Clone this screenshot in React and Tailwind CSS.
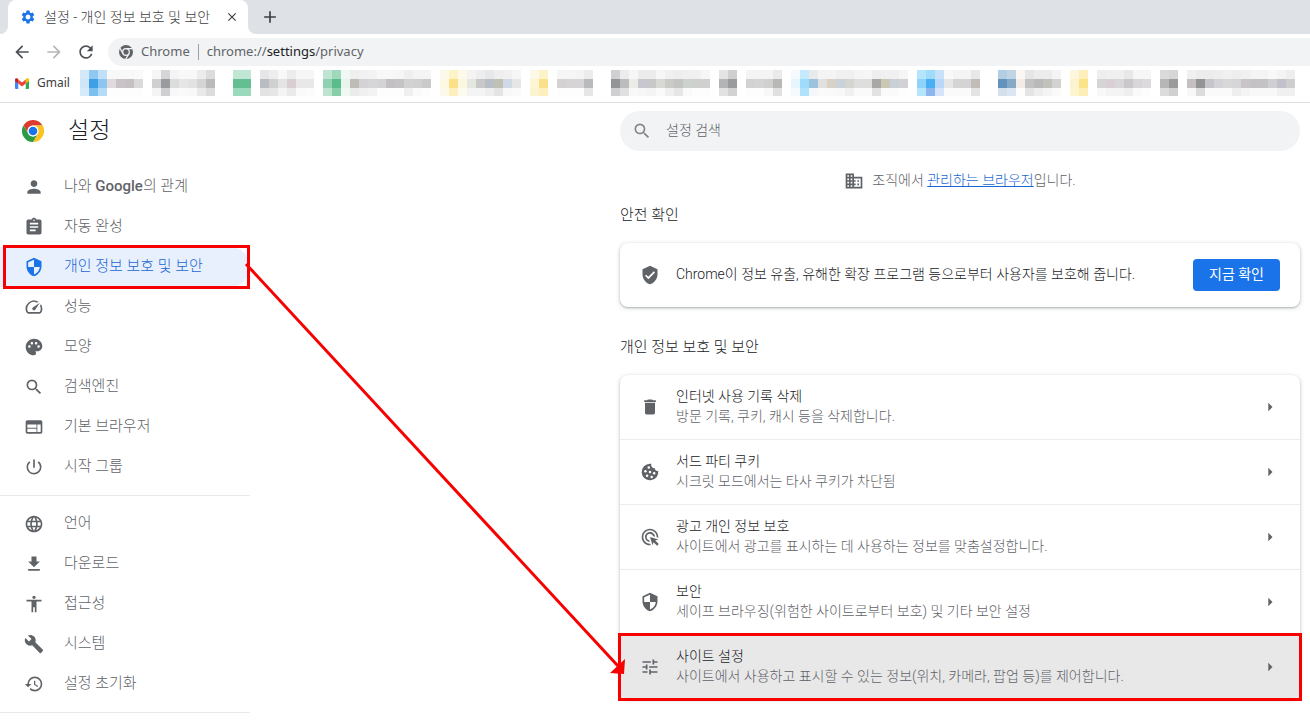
import React from "react";
import {
  MdPerson, MdAssignment, MdSecurity, MdSpeed, MdPalette, MdSearch, MdWeb, MdPowerSettingsNew,
  MdLanguage, MdFileDownload, MdAccessibility, MdBuild, MdHistory, MdDomain, MdVerifiedUser,
  MdDelete, MdAdsClick, MdTune, MdArrowRight, MdSettings, MdArrowBack, MdArrowForward,
  MdRefresh, MdClose, MdAdd,
} from "react-icons/md";

function CookieIcon({ size, className }) {
  return (
    <svg width={size} height={size} viewBox="0 0 24 24" className={className} aria-hidden="true">
      <path fill="currentColor" d="M12 2A10 10 0 1 0 21.900 10.600A3.600 3.600 0 0 1 17.800 7.400A4 4 0 0 1 13.600 2.130A10 10 0 0 0 12 2Z" />
      <g fill="#fff">
        <circle cx="10.500" cy="6.500" r="1.500" />
        <circle cx="6.500" cy="11" r="1.500" />
        <circle cx="12" cy="12" r="1.500" />
        <circle cx="17" cy="13.500" r="1.500" />
        <circle cx="8.500" cy="16.500" r="1.500" />
        <circle cx="14" cy="18" r="1.500" />
      </g>
    </svg>
  );
}

const mainMenu = [
  { icon: MdPerson, label: <>나와 <b className="font-medium">Google</b>의 관계</> },
  { icon: MdAssignment, label: "자동 완성" },
  { icon: MdSecurity, label: "개인 정보 보호 및 보안", active: true },
  { icon: MdSpeed, label: "성능" },
  { icon: MdPalette, label: "모양" },
  { icon: MdSearch, label: "검색엔진" },
  { icon: MdWeb, label: "기본 브라우저" },
  { icon: MdPowerSettingsNew, label: "시작 그룹" },
];

const advancedMenu = [
  { icon: MdLanguage, label: "언어" },
  { icon: MdFileDownload, label: "다운로드" },
  { icon: MdAccessibility, label: "접근성" },
  { icon: MdBuild, label: "시스템" },
  { icon: MdHistory, label: "설정 초기화" },
];

const privacyRows = [
  { icon: MdDelete, title: "인터넷 사용 기록 삭제", text: "방문 기록, 쿠키, 캐시 등을 삭제합니다." },
  { icon: CookieIcon, title: "서드 파티 쿠키", text: "시크릿 모드에서는 타사 쿠키가 차단됨" },
  { icon: MdAdsClick, title: "광고 개인 정보 보호", text: "사이트에서 광고를 표시하는 데 사용하는 정보를 맞춤설정합니다." },
  { icon: MdSecurity, title: "보안", text: "세이프 브라우징(위험한 사이트로부터 보호) 및 기타 보안 설정" },
  { icon: MdTune, title: "사이트 설정", text: "사이트에서 사용하고 표시할 수 있는 정보(위치, 카메라, 팝업 등)를 제어합니다.", active: true },
];

// Pixelated bookmarks: column index, then the top, middle and bottom cell colours.
const mosaic = `
0 d3e9fa cfe6f8 d6ebfa|1 8fc8f3 3da0e4 7cc0f0|2 bfe0f8 8cc5f2 b5dbf8|3 f8f8f8 e0dadc fdfdfd|4 f8f8f8 c9c3c7 fdfdfd|5 f8f8f8 c6c0c4 fdfdfd|6 fafafa dadada fdfdfd
8 f6f6f6 d0d0d0 f4f4f4|9 d5d5d7 9a9b9e cfcfd1|10 f4f4f4 dcdcdc f8f8f8|11 f8f8f8 e6e6e6 fafafa|12 f8f8f8 e2e2e2 f8f8f8|13 ececec d4d4d4 e9e9e9|14 dcdcdc b9bbba dcdcdc
17 bfe7d3 63bf92 9ad9bb|18 bfe7d3 63bf92 9ad9bb|20 e6e6e8 b9bcc0 e3e3e3|21 ededed d0d0d2 e6e6e6|22 f8f8f8 e4e4e4 f4f4f4|23 ececec d9cfd3 eaeaea|24 f6f6f6 e8e8e8 fafafa|25 f6f6f6 e8e8e8 fcfcfc
27 bfe5d2 8fd1b1 bce4cf|28 9fd8bb 5abb8b 86cfaa|29 f0f8f4 e8f5ee f0f8f4|30 efefee bdbdb6 ebebea|31 f1f1f2 d3d3d6 f0f0f0|32 f3f3f3 d6d6d8 f3f3f3|33 f8f8f8 d4d4d6 fdfdfd|34 f8f8f8 c2c0c2 fdfdfd|35 f6f6f6 c4c4c4 fdfdfd|36 efefef d2d2d2 efefef|37 f4f4f4 d0d0d0 fafafa|38 f4f4f4 cacaca fdfdfd
40 fdf9ea fdf8e4 fdf9ea|41 fdf3c8 fbe08a fdf0be|42 fdfaea fbf8e0 fdfaee|43 f4f4f4 e4e6e2 f4f4f4|44 eeeeee c8c8c8 f4f4f4|45 e6e8ea b8bfc6 eeeeee|46 eeeeee c0c0b6 e4e4e4|47 f0f0f0 d0dae6 f8f8f8|48 f6f6f6 e6e6e6 fafafa
50 fdf9e8 fdf6d5 fcf4d0|51 fdf3c8 fbe08a fdf0be|53 f6f6f6 d6d2d2 fdfdfd|54 f6f6f6 d6d4d4 fdfdfd|55 f4f4f4 d6d4d4 fdfdfd|56 ececec b8babc e6e6e6
59 d0d0d2 939498 cfcfd1|60 ececec bcbcbe e0e0e0|61 f6f6f6 ecece6 f8f8f8|62 ececec c8c6ce f6f6f6|63 ececec c8c8c8 f4f4f4|64 f6f6f6 d8d8d4 fafafa|65 f0f0f0 cacac6 f0f0f0|66 eeeeee c4c4c2 e6e6e6|67 f0f0f0 ced2ce fafafa|68 f0f0f0 ced0ce fdfdfd|69 f6f6f6 d0d0d0 fdfdfd
71 e4e4e4 b4b4b6 e2e2e2|72 cfcfcf 9a9b9b d2d2d2|74 f4f4f4 d2d2d2 fdfdfd|75 f4f4f4 d4d4d4 fdfdfd|76 f4f4f4 d0d0d0 f8f8f8|77 eaeaea b8b8b6 e0e0e0
79 f4fafe e6f6fe f4fafe|80 c4ebfd 9fdcfc b0e2fb|81 e8eaec 9cc2de f4f8fa|82 f4f4f4 e0e0de fafafa|83 f4f4f4 d8d2c6 fafafa|84 f0f0f0 c9d2d8 f8f8f8|85 f0f0f0 d4d4d0 f0f0f0|86 f4f4f4 dedede fafafa|87 f6f6f6 dedede fafafa|88 eeeeee a8a9a6 e2e2e2|89 f0f0f0 ccc6b4 fafafa|90 f0f0f0 c8d0d8 fafafa|91 f6f6f6 d2d2d4 fdfdfd
93 b3e5fc 90d3fa b5e5fb|94 9fdcf9 48b0f2 8fb6ec|95 c8e0f9 b9d8f9 d5e4fb|96 f8f8f8 e6e6e6 fafafa|97 f4f4f4 d4d4d4 fafafa|98 f4f4f4 d4d4d4 fafafa|99 e8e8e8 c2bcb6 e4e4e4
102 b3cee2 6392bc d5e0ec|103 c0d4e4 86a9c6 dce5f2|104 faf6f4 f2ebe6 fdfdfd|105 e6e6e6 c2c2c4 e4e4e4|106 ececec b9b9b9 eeeeee|107 ececec c2c2bc f4f4f4|108 f4f4f4 d2d2d2 fafafa
110 fdf6dc fdf3cf fdf4d0|111 fdeebc fbe38a fdeeb8|113 eeeeee d6d4d6 f8f8f8|114 f0f0f0 d8d0d4 f4f4f4|115 f0f0f0 d8d6d6 f4f4f4|116 e8e8e8 cac8ca eeeeee|117 f6f6f6 d8d6d8 fafafa|118 f6f6f6 dcdadc fdfdfd
120 dadada b6b6b6 dcdcdc|121 d6d6d6 9a9a9a d0d0d0|123 f0f0f0 c4c0c2 f8f8f8|124 ececec 949494 dcdcdc|125 ececec c6c6ca fafafa|126 eeeeee d2d2d8 fafafa|127 f0f0f0 d8d8d8 fafafa|128 eeeeee d6d6d8 eeeeee|129 f0f0f0 c8c4c8 f4f4f4|130 f4f4f4 c4c2c4 f8f8f8|131 f4f4f4 c4c2c4 f8f8f8|132 f8f8f8 d0d0d4 f8f8f8|133 f4f4f4 c2c0ca f0f0f0|134 eeeeee cecece f0f0f0`
  .trim()
  .split(/[|\n]/)
  .map((cell) => cell.split(" "));

function BookmarkMosaic() {
  return (
    <svg width="1215" height="26" viewBox="0 0 1215 26" shapeRendering="crispEdges" aria-hidden="true" className="shrink-0">
      {mosaic.map(([col, top, mid, bottom]) => (
        <g key={col}>
          <rect x={col * 9} y="0" width="9" height="9" fill={`#${top}`} />
          <rect x={col * 9} y="9" width="9" height="9" fill={`#${mid}`} />
          <rect x={col * 9} y="18" width="9" height="8" fill={`#${bottom}`} />
        </g>
      ))}
    </svg>
  );
}

function ChromeLogo({ size, colors, ring, core }) {
  const [red, yellow, green] = colors;
  return (
    <svg width={size} height={size} viewBox="1 1 22 22" aria-hidden="true" className="shrink-0">
      <path fill={red} d="M2.47 6.5A11 11 0 0 1 21.53 6.5H12A5.5 5.5 0 0 0 7.24 14.75Z" />
      <path fill={yellow} d="M21.53 6.5A11 11 0 0 1 12 23L16.76 14.75A5.5 5.5 0 0 0 12 6.5Z" />
      <path fill={green} d="M12 23A11 11 0 0 1 2.47 6.5L7.24 14.75A5.5 5.5 0 0 0 16.76 14.75Z" />
      <circle cx="12" cy="12" r="5.4" fill={ring} />
      <circle cx="12" cy="12" r="4.3" fill={core} />
    </svg>
  );
}

function GreyChrome() {
  return (
    <svg width="14" height="14" viewBox="1 1 22 22" aria-hidden="true" className="shrink-0">
      <circle cx="12" cy="12" r="11" fill="#5f6368" />
      <circle cx="12" cy="12" r="5.2" fill="none" stroke="#f1f3f4" strokeWidth="2" />
      <path d="M12 6.7H22M16.6 14.7L11.6 23M7.4 14.7L2.4 6" stroke="#f1f3f4" strokeWidth="2" />
    </svg>
  );
}

function GmailLogo() {
  return (
    <svg width="14" height="11" viewBox="0 0 28 22" aria-hidden="true" className="shrink-0">
      <path fill="#4285f4" d="M0 5V20a2 2 0 0 0 2 2H6.500V9Z" />
      <path fill="#34a853" d="M28 5V20a2 2 0 0 1-2 2H21.500V9Z" />
      <path fill="#c5221f" d="M0 3.500V6l6.500 5V3L5 1.200C3 0 0 1 0 3.500Z" />
      <path fill="#fbbc04" d="M28 3.500V6l-6.500 5V3L23 1.200C25 0 28 1 28 3.500Z" />
      <path fill="#ea4335" d="M6.500 3L14 8.800 21.500 3V11L14 16.800 6.500 11Z" />
    </svg>
  );
}

function Menu({ items }) {
  return (
    <ul className="border-b border-[#e8eaed] py-2">
      {items.map(({ icon: Icon, label, active }, i) => (
        <li key={i} className="relative">
          <a
            href="#section"
            aria-current={active ? "page" : undefined}
            className={
              active
                ? "flex h-10 items-center gap-5 rounded-r-full bg-[#e8f0fe] pl-6 text-[#1967d2]"
                : "flex h-10 items-center gap-5 pl-6 text-[#5f6368]"
            }
          >
            <Icon size={20} className={active ? "text-[#1a73e8]" : ""} />
            <span className="pb-0.5 text-[15px] leading-5">{label}</span>
          </a>
          {active && <span className="absolute -inset-y-0.5 left-[3px] right-0 border-3 border-[#f60000]" />}
        </li>
      ))}
    </ul>
  );
}

export default function App() {
  return (
    <div className="min-h-screen bg-white font-['Roboto','Noto_Sans_CJK_KR',sans-serif] font-light text-[#202124]">
      <header className="overflow-hidden border-b border-[#dcdee1]">
        <div className="flex h-[34px] items-center bg-[#dee1e6] pl-2">
          <div className="relative flex h-full w-60 items-center rounded-t-lg bg-white pl-3 pr-2">
            <svg width="8" height="8" className="absolute -left-2 bottom-0" aria-hidden="true"><path d="M8 0V8H0A8 8 0 0 0 8 0Z" fill="#fff" /></svg>
            <svg width="8" height="8" className="absolute -right-2 bottom-0" aria-hidden="true"><path d="M0 0V8H8A8 8 0 0 1 0 0Z" fill="#fff" /></svg>
            <MdSettings size={16} className="shrink-0 text-[#1a73e8]" />
            <span className="flex-1 whitespace-nowrap pl-2 text-sm leading-5 text-[#3c4043]">설정 - 개인 정보 보호 및 보안</span>
            <button aria-label="탭 닫기" className="flex size-4 items-center justify-center text-[#3c4043]"><MdClose size={14} /></button>
          </div>
          <button aria-label="새 탭" className="ml-3 flex size-5 items-center justify-center text-[#3c4043]"><MdAdd size={20} /></button>
        </div>
        <div className="flex h-9 items-center gap-3 pl-3 text-[#5f6368]">
          <button aria-label="뒤로"><MdArrowBack size={20} className="text-[#4d5156]" /></button>
          <button aria-label="앞으로"><MdArrowForward size={20} className="text-[#b4b6b9]" /></button>
          <button aria-label="새로고침"><MdRefresh size={20} className="text-[#4d5156]" /></button>
          <div className="flex h-7 flex-1 items-center rounded-l-full bg-[#f1f3f4] pl-[11px] font-['Noto_Sans',sans-serif] text-[13px] font-normal">
            <GreyChrome />
            <span className="px-2">Chrome</span>
            <span className="h-4 w-px bg-[#9aa0a6]" />
            <span className="pl-2">chrome://<span className="text-[#202124]">settings</span>/privacy</span>
          </div>
        </div>
        <div className="flex h-8 items-start pl-[15px]">
          <div className="flex h-[26px] w-[65px] shrink-0 items-center">
            <GmailLogo />
            <a href="#gmail" className="pl-2 font-['Noto_Sans',sans-serif] text-xs font-normal text-[#3c4043]">Gmail</a>
          </div>
          <BookmarkMosaic />
        </div>
      </header>

      <div className="relative flex items-start justify-between overflow-hidden pb-2">
        <nav aria-label="설정" className="w-[250px] shrink-0">
          <div className="flex h-14 items-center gap-6 pl-[22px]">
            <ChromeLogo size={22} colors={["#dd3b2e", "#fcc31e", "#2a9a47"]} ring="#ffffff" core="#1a73e8" />
            <h1 className="text-[23px] leading-7">설정</h1>
          </div>
          <Menu items={mainMenu} />
          <Menu items={advancedMenu} />
        </nav>

        <main className="mr-2.5 w-[680px] shrink-0 pt-2">
          <label className="flex h-10 items-center gap-3.5 rounded-full bg-[#f1f3f4] px-3 text-[#80868b]">
            <MdSearch size={20} className="shrink-0" />
            <input
              type="search"
              aria-label="설정 검색"
              placeholder="설정 검색"
              className="w-full bg-transparent pb-0.5 text-sm text-[#5f6368] outline-none placeholder:text-[#5f6368]"
            />
          </label>

          <div className="flex h-[60px] items-center justify-center gap-2 text-sm leading-5 text-[#5f6368]">
            <MdDomain size={20} />
            <p className="pb-0.5">조직에서 <a href="#managed" className="text-[#1967d2] underline">관리하는 브라우저</a>입니다.</p>
          </div>

          <h2 className="-mt-2 pb-4 text-[15px] leading-6">안전 확인</h2>
          <section className="flex h-16 items-center rounded-lg bg-white px-5 shadow-[0_1px_2px_rgba(60,64,67,0.3),0_1px_5px_rgba(60,64,67,0.2)]">
            <MdVerifiedUser size={20} className="text-[#5f6368]" />
            <p className="flex-1 pb-0.5 pl-4 text-sm leading-5">Chrome이 정보 유출, 유해한 확장 프로그램 등으로부터 사용자를 보호해 줍니다.</p>
            <button className="h-8 rounded bg-[#1a73e8] px-4 pb-0.5 text-sm font-normal text-white">지금 확인</button>
          </section>

          <h2 className="pb-4 pt-7 text-[15px] leading-6">개인 정보 보호 및 보안</h2>
          <ul className="rounded-lg bg-white shadow-[0_1px_2px_rgba(60,64,67,0.3),0_1px_5px_rgba(60,64,67,0.2)]">
            {privacyRows.map(({ icon: Icon, title, text, active }) => (
              <li key={title} className={active ? "relative bg-[#e8e8e8]" : "border-b border-[#ebecee]"}>
                <button className="flex h-16 w-full items-center px-5 text-left text-[#5f6368]">
                  <Icon size={20} className="shrink-0" />
                  <span className="flex flex-1 flex-col pb-0.5 pl-4 text-sm leading-5">
                    <span className="text-[#202124]">{title}</span>
                    <span>{text}</span>
                  </span>
                  <MdArrowRight size={20} />
                </button>
                {active && <span className="absolute -inset-0.5 border-3 border-[#f60000]" />}
              </li>
            ))}
          </ul>
        </main>

        <svg width="640" height="600" className="pointer-events-none absolute left-0 top-0" aria-hidden="true">
          <path d="M246 161L618 563" stroke="#f60000" strokeWidth="3" />
          <path d="M625 556L624 571L610 570Z" fill="#f60000" />
        </svg>
      </div>
    </div>
  );
}
